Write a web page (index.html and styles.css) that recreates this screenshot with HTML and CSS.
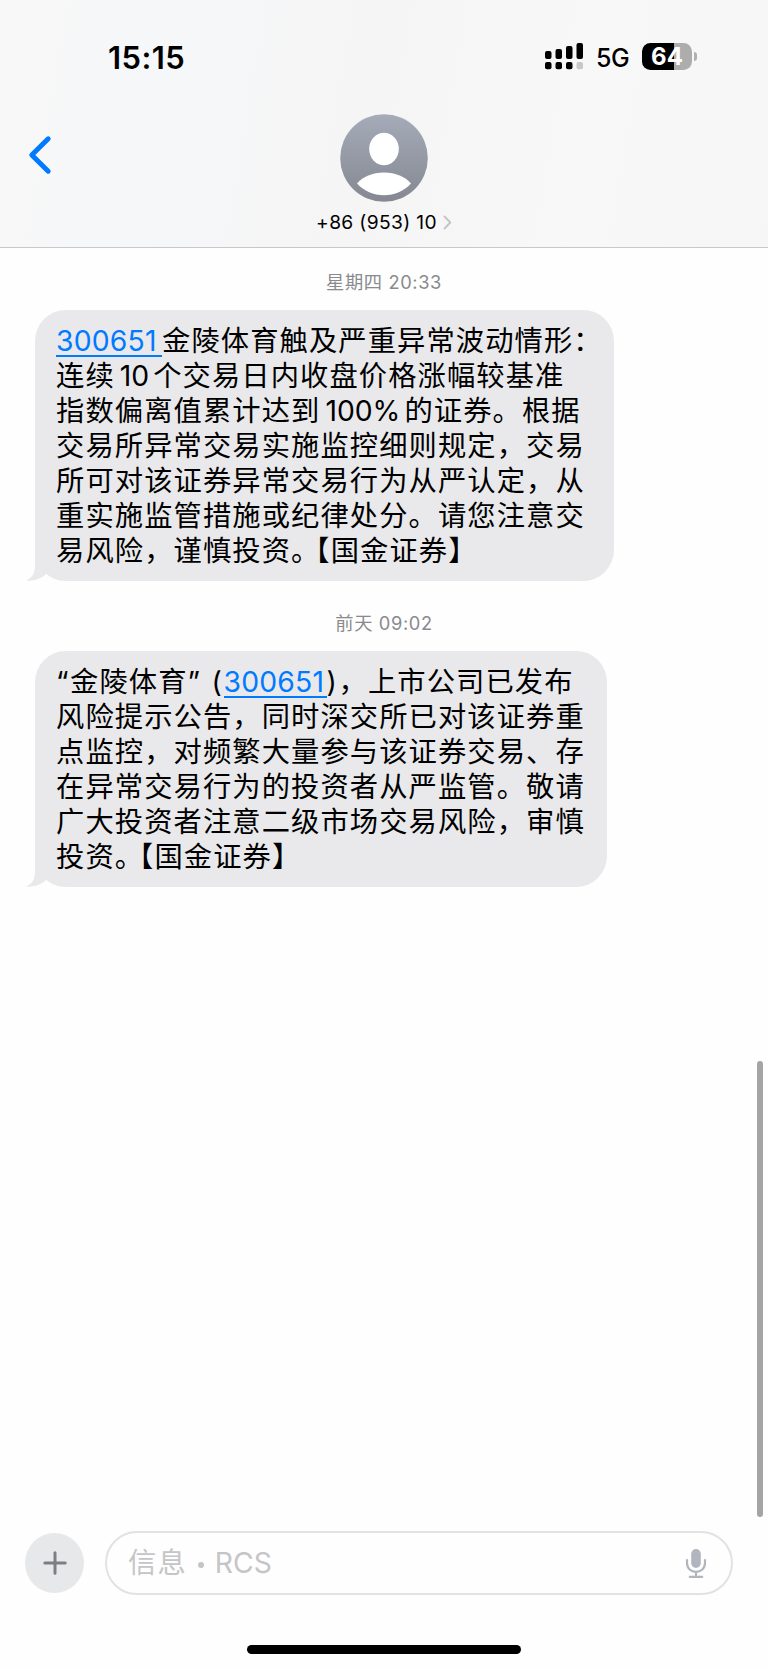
FILE: index.html
```html
<!DOCTYPE html>
<html lang="zh-CN">
<head>
    <meta charset="UTF-8">
    <meta name="viewport" content="width=device-width, initial-scale=1.0">
    <title>信息</title>
    <link rel="stylesheet" href="styles.css">
</head>
<body>
    <div class="phone">
        <header class="header">
            <div class="status-bar">
                <div class="time">15:15</div>
                <div class="status-icons">
                    <svg class="signal" width="39" height="27" viewBox="0 0 39 27">
                        <rect x="0" y="8" width="6.5" height="8" rx="2"/>
                        <rect x="10.5" y="6" width="6.5" height="10" rx="2"/>
                        <rect x="21" y="3" width="6.5" height="13" rx="2"/>
                        <rect x="31.5" y="0" width="6.5" height="16" rx="2"/>
                        <rect x="0" y="19" width="6.5" height="7.3" rx="2"/>
                        <rect x="10.5" y="19" width="6.5" height="7.3" rx="2"/>
                        <rect x="21" y="19" width="6.5" height="7.3" rx="2"/>
                        <rect x="31.5" y="19" width="6.5" height="7.3" rx="2" fill="#c8c8c8"/>
                    </svg>
                    <span class="network">5G</span>
                    <div class="battery">64</div>
                    <div class="battery-tip"></div>
                </div>
            </div>
            <div class="contact-bar">
                <svg class="back" width="24" height="40" viewBox="0 0 24 40">
                    <path d="M20.2 3.8 L3.8 20 L20.2 36.2" fill="none" stroke="#007aff" stroke-width="5" stroke-linecap="round" stroke-linejoin="round"/>
                </svg>
                <div class="contact">
                    <svg class="avatar" width="88" height="88" viewBox="0 0 88 88">
                        <defs>
                            <linearGradient id="avatarFill" x1="0" y1="0" x2="0" y2="1">
                                <stop offset="0" stop-color="#a5abb9"/>
                                <stop offset="1" stop-color="#858891"/>
                            </linearGradient>
                        </defs>
                        <circle cx="44" cy="44" r="43.8" fill="url(#avatarFill)"/>
                        <ellipse cx="44" cy="35" rx="14.8" ry="16.2" fill="#fff"/>
                        <path d="M17 69.5 C23 62.5 32.5 58.5 44 58.5 C55.5 58.5 65 62.5 71 69.5 C64 77 54.5 81.3 44 81.3 C33.5 81.3 24 77 17 69.5 Z" fill="#fff"/>
                    </svg>
                    <div class="contact-name">
                        <span>+86 (953) 10</span>
                        <svg width="9" height="15" viewBox="0 0 9 15">
                            <path d="M1.5 1.5 L7.3 7.5 L1.5 13.5" fill="none" stroke="#c4c4c7" stroke-width="1.8" stroke-linecap="round" stroke-linejoin="round"/>
                        </svg>
                    </div>
                </div>
            </div>
        </header>

        <main class="messages">
            <div class="date">星期四 20:33</div>
            <div class="bubble bubble-first">
                <a class="link link-wide" href="#">300651</a>金陵体育触及严重异常波动情形：<br>
                连续<span class="num num-ten">10</span>个交易日内收盘价格涨幅较基准<br>
                指数偏离值累计达到<span class="num">100%</span>的证券。根据<br>
                交易所异常交易实施监控细则规定，交易<br>
                所可对该证券异常交易行为从严认定，从<br>
                重实施监管措施或纪律处分。请您注意交<br>
                易风险，谨慎投资。<span class="bracket">【</span>国金证券】
                <svg class="tail" width="24" height="32" viewBox="0 0 24 32">
                    <path d="M9 0 V16 C9 24 6 29.5 0 31.5 C8 32.5 15.5 29.5 20 25 L24 20 V0 Z" fill="#e9e9eb"/>
                </svg>
            </div>
            <div class="date">前天 09:02</div>
            <div class="bubble bubble-second">
                <span class="quote">“</span>金陵体育<span class="quote-end">”</span><span class="paren">(</span><a class="link" href="#">300651</a><span class="paren-end">)</span>，上市公司已发布<br>
                风险提示公告，同时深交所已对该证券重<br>
                点监控，对频繁大量参与该证券交易、存<br>
                在异常交易行为的投资者从严监管。敬请<br>
                广大投资者注意二级市场交易风险，审慎<br>
                投资。<span class="bracket">【</span>国金证券】
                <svg class="tail" width="24" height="32" viewBox="0 0 24 32">
                    <path d="M9 0 V16 C9 24 6 29.5 0 31.5 C8 32.5 15.5 29.5 20 25 L24 20 V0 Z" fill="#e9e9eb"/>
                </svg>
            </div>
            <div class="scrollbar"></div>
        </main>

        <footer class="composer">
            <button class="add" type="button">
                <svg width="24" height="24" viewBox="0 0 24 24">
                    <path d="M12 1.8 V22.2 M1.8 12 H22.2" stroke="#7d7e85" stroke-width="3" stroke-linecap="round"/>
                </svg>
            </button>
            <div class="input">
                <div class="placeholder">
                    <span class="label">信息</span>
                    <i class="dot"></i>
                    <span class="rcs">RCS</span>
                </div>
                <svg width="22" height="31" viewBox="0 0 22 31">
                    <rect x="6.2" y="1" width="9.6" height="19" rx="4.8" fill="#b1b5bd"/>
                    <path d="M2 12 V15 C2 20.5 6 23.8 11 23.8 C16 23.8 20 20.5 20 15 V12 M11 23.8 V28.5 M4.8 28.8 H17.2" fill="none" stroke="#b1b5bd" stroke-width="2.2" stroke-linecap="round"/>
                </svg>
            </div>
        </footer>
        <div class="home-indicator"></div>
    </div>
</body>
</html>
```
FILE: styles.css
```css
* {
    box-sizing: border-box;
}

body {
    margin: 0;
    background-color: #fefefe;
    font-family: Inter, "Noto Sans CJK SC", sans-serif;
    color: #000;
}

.phone {
    display: flex;
    flex-direction: column;
    width: 768px;
    height: 1669px;
    overflow: hidden;
}

.header {
    height: 248px;
    background: linear-gradient(100deg, #f8f8f8 0%, #f6f7f9 20%, #f5f5f5 48%, #f8f8f8 75%, #f6f6f6 100%);
    border-bottom: 1px solid #c8c8ca;
}

.status-bar {
    display: flex;
    justify-content: space-between;
    height: 114px;
    padding: 43px 71px 0 108px;
}

.time {
    height: 28px;
    line-height: 29px;
    font-size: 31px;
    font-weight: 600;
    letter-spacing: 0.4px;
}

.status-icons {
    display: flex;
    align-items: center;
    height: 27px;
}

.network {
    width: 34px;
    margin: 3px 12px 0 12px;
    font-size: 25px;
    line-height: 27px;
    font-weight: 500;
    letter-spacing: -0.5px;
}

.battery {
    width: 50px;
    height: 27px;
    border-radius: 8.5px;
    background: linear-gradient(to right, #000 64%, #adadad 64%);
    color: #fff;
    font-size: 24px;
    font-weight: 700;
    line-height: 28px;
    text-align: center;
}

.battery-tip {
    width: 3px;
    height: 9px;
    margin-left: 2px;
    border-radius: 0 4px 4px 0;
    background-color: #b0b0b0;
}

.contact-bar {
    display: grid;
    grid-template-columns: 1fr auto 1fr;
    padding: 0 28px;
}

.back {
    margin-top: 21px;
}

.contact {
    display: flex;
    flex-direction: column;
    align-items: center;
}

.contact-name {
    display: flex;
    align-items: center;
    gap: 6px;
    margin-top: 8px;
    font-size: 19.2px;
    line-height: 25px;
    letter-spacing: 0.35px;
    white-space: nowrap;
}

.messages {
    position: relative;
    height: 1283px;
    padding-left: 35px;
}

.date {
    height: 62px;
    padding-top: 20px;
    margin-left: -35px;
    text-align: center;
    font-size: 18.3px;
    line-height: 29px;
    letter-spacing: 0.6px;
    color: #8a8a8e;
}

.bubble {
    position: relative;
    padding: 14px 0 0 21px;
    border-radius: 31px;
    background-color: #e9e9eb;
    font-size: 28.3px;
    line-height: 35px;
    letter-spacing: 1.08px;
    white-space: nowrap;
}

.bubble-first {
    width: 579px;
    height: 271px;
    margin-bottom: 8px;
}

.bubble-second {
    width: 572px;
    height: 236px;
}

.link {
    display: inline-block;
    width: 103px;
    height: 35px;
    color: #007aff;
    letter-spacing: 0.2px;
    text-decoration: none;
    background: linear-gradient(#007aff, #007aff) 0 31px / 100% 2px no-repeat;
}

.link-wide {
    width: 106px;
}

.num {
    margin: 0 4px 0 5px;
    letter-spacing: 0;
}

.bracket {
    margin-left: -5px;
}

.tail {
    position: absolute;
    left: -9px;
    bottom: 0;
}

.quote,
.quote-end,
.paren,
.paren-end {
    display: inline-block;
    width: 14px;
}

.quote-end {
    width: 24px;
}

.paren {
    width: 12px;
}

.paren-end {
    width: 12px;
}

.scrollbar {
    position: absolute;
    right: 5px;
    top: 813px;
    width: 6px;
    height: 456px;
    border-radius: 3px;
    background-color: #a4a4a4;
}

.composer {
    display: flex;
    align-items: center;
    gap: 21px;
    height: 64px;
    padding: 0 35px 0 25px;
}

.add {
    display: flex;
    align-items: center;
    justify-content: center;
    width: 59px;
    height: 60px;
    padding: 0;
    border: none;
    border-radius: 50%;
    background-color: #e7e8ea;
}

.input {
    display: flex;
    align-items: center;
    justify-content: space-between;
    flex: 1;
    height: 64px;
    padding: 0 24px 0 21px;
    border: 2px solid #e2e2e4;
    border-radius: 32px;
}

.placeholder {
    display: flex;
    align-items: center;
    font-size: 28.3px;
    line-height: 35px;
    color: #c5c5c7;
}

.label {
    letter-spacing: 1.08px;
}

.dot {
    width: 6px;
    height: 6px;
    margin: 4px 11px 0 11px;
    border-radius: 50%;
    background-color: #c5c5c7;
}

.home-indicator {
    width: 274px;
    height: 9px;
    margin: 50px auto 0;
    border-radius: 5px;
    background-color: #000;
}
```
